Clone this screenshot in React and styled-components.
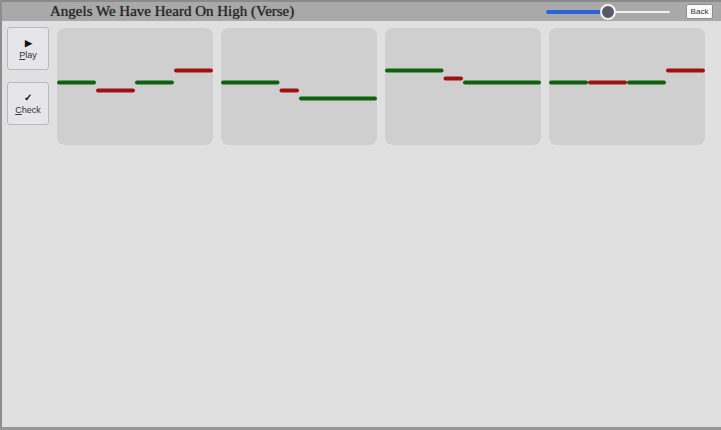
import React from "react";
import styled, { createGlobalStyle } from "styled-components";

const Global = createGlobalStyle`
  html, body { margin: 0; padding: 0; }
  body { background: #e0e0e0; font-family: "Liberation Sans", Arial, sans-serif; }
`;

const Frame = styled.div`
  width: 721px;
  height: 430px;
  box-sizing: border-box;
  border-left: 2px solid #8e8e8e;
  border-bottom: 3px solid #979797;
  background: #e0e0e0;
  display: flex;
  flex-direction: column;
`;

const TitleBar = styled.div`
  height: 21px;
  box-sizing: border-box;
  border-top: 2px solid #8a8a8a;
  background: #a9a9a9;
  display: flex;
  align-items: center;
  padding-left: 48px;
  padding-right: 8px;
`;

const Title = styled.div`
  flex: 1;
  font-family: "Liberation Serif", "Times New Roman", serif;
  font-size: 15px;
  color: #262626;
  text-shadow: 0 0 1px rgba(30, 30, 30, 0.7);
  white-space: nowrap;
`;

const Slider = styled.div`
  position: relative;
  width: 124px;
  height: 16px;
  margin-right: 16px;
`;

const Track = styled.div`
  position: absolute;
  left: 0;
  right: 0;
  top: 7px;
  height: 2px;
  border-radius: 1px;
  background: #f0f0f0;
`;

const Fill = styled.div`
  position: absolute;
  left: 0;
  top: 6px;
  height: 4px;
  border-radius: 2px;
  background: #2a62d8;
`;

const Thumb = styled.div`
  position: absolute;
  top: 0;
  width: 12px;
  height: 12px;
  margin-left: -8px;
  border-radius: 50%;
  background: #5a5a66;
  border: 2px solid #f2f2f2;
`;

const BackButton = styled.button`
  width: 27px;
  height: 15px;
  padding: 0;
  border: 1px solid #8f8f8f;
  border-radius: 2px;
  background: #fafafa;
  font-family: "Liberation Sans", Arial, sans-serif;
  font-size: 8px;
  color: #333;
`;

const Main = styled.div`
  display: flex;
  padding: 6px 0 0 5px;
  gap: 8px;
  align-items: flex-start;
`;

const Sidebar = styled.div`
  display: flex;
  flex-direction: column;
  gap: 12px;
`;

const ToolButton = styled.button`
  width: 42px;
  height: 43px;
  box-sizing: border-box;
  padding: 0;
  border: 1px solid #b8b8c0;
  border-radius: 3px;
  background: #e6e6ea;
  display: flex;
  flex-direction: column;
  align-items: center;
  justify-content: center;
  gap: 2px;
  color: #333;
  font-family: "Liberation Sans", Arial, sans-serif;
  font-size: 9px;
  u { text-decoration: underline; }
`;

const Glyph = styled.span`
  font-size: ${(p) => p.$size || 9}px;
  font-weight: bold;
  line-height: 10px;
  color: #111;
`;

const Cards = styled.div`
  display: flex;
  gap: 8px;
  margin-top: 1px;
`;

const Card = styled.div`
  width: 156px;
  height: 117px;
  border-radius: 8px;
  background: #cfcfcf;
  overflow: hidden;
`;

const BEAT = 39;
const COLORS = { g: "#0e620e", r: "#a01212" };

const phrases = [
  [["g", 54.5, 0, 1], ["r", 62.5, 1, 1], ["g", 54.5, 2, 1], ["r", 42.5, 3, 1]],
  [["g", 54.5, 0, 1.5], ["r", 62.5, 1.5, 0.5], ["g", 70.5, 2, 2]],
  [["g", 42.5, 0, 1.5], ["r", 50.5, 1.5, 0.5], ["g", 54.5, 2, 2]],
  [["g", 54.5, 0, 1], ["r", 54.5, 1, 1], ["g", 54.5, 2, 1], ["r", 42.5, 3, 1]],
];

function Phrase({ notes }) {
  return (
    <Card>
      <svg width="156" height="117">
        {notes.map(([c, y, start, len], i) => (
          <rect
            key={i}
            x={start * BEAT}
            y={y - 2}
            width={len * BEAT}
            height={4}
            rx={2}
            fill={COLORS[c]}
          />
        ))}
      </svg>
    </Card>
  );
}

export default function App() {
  const volume = 0.5;
  return (
    <>
      <Global />
      <Frame>
        <TitleBar>
          <Title>Angels We Have Heard On High (Verse)</Title>
          <Slider>
            <Track />
            <Fill style={{ width: `${volume * 100}%` }} />
            <Thumb style={{ left: `${volume * 100}%` }} />
          </Slider>
          <BackButton>Back</BackButton>
        </TitleBar>
        <Main>
          <Sidebar>
            <ToolButton>
              <Glyph $size={9}>▶</Glyph>
              <span><u>P</u>lay</span>
            </ToolButton>
            <ToolButton>
              <Glyph $size={10}>✓</Glyph>
              <span><u>C</u>heck</span>
            </ToolButton>
          </Sidebar>
          <Cards>
            {phrases.map((notes, i) => (
              <Phrase key={i} notes={notes} />
            ))}
          </Cards>
        </Main>
      </Frame>
    </>
  );
}
